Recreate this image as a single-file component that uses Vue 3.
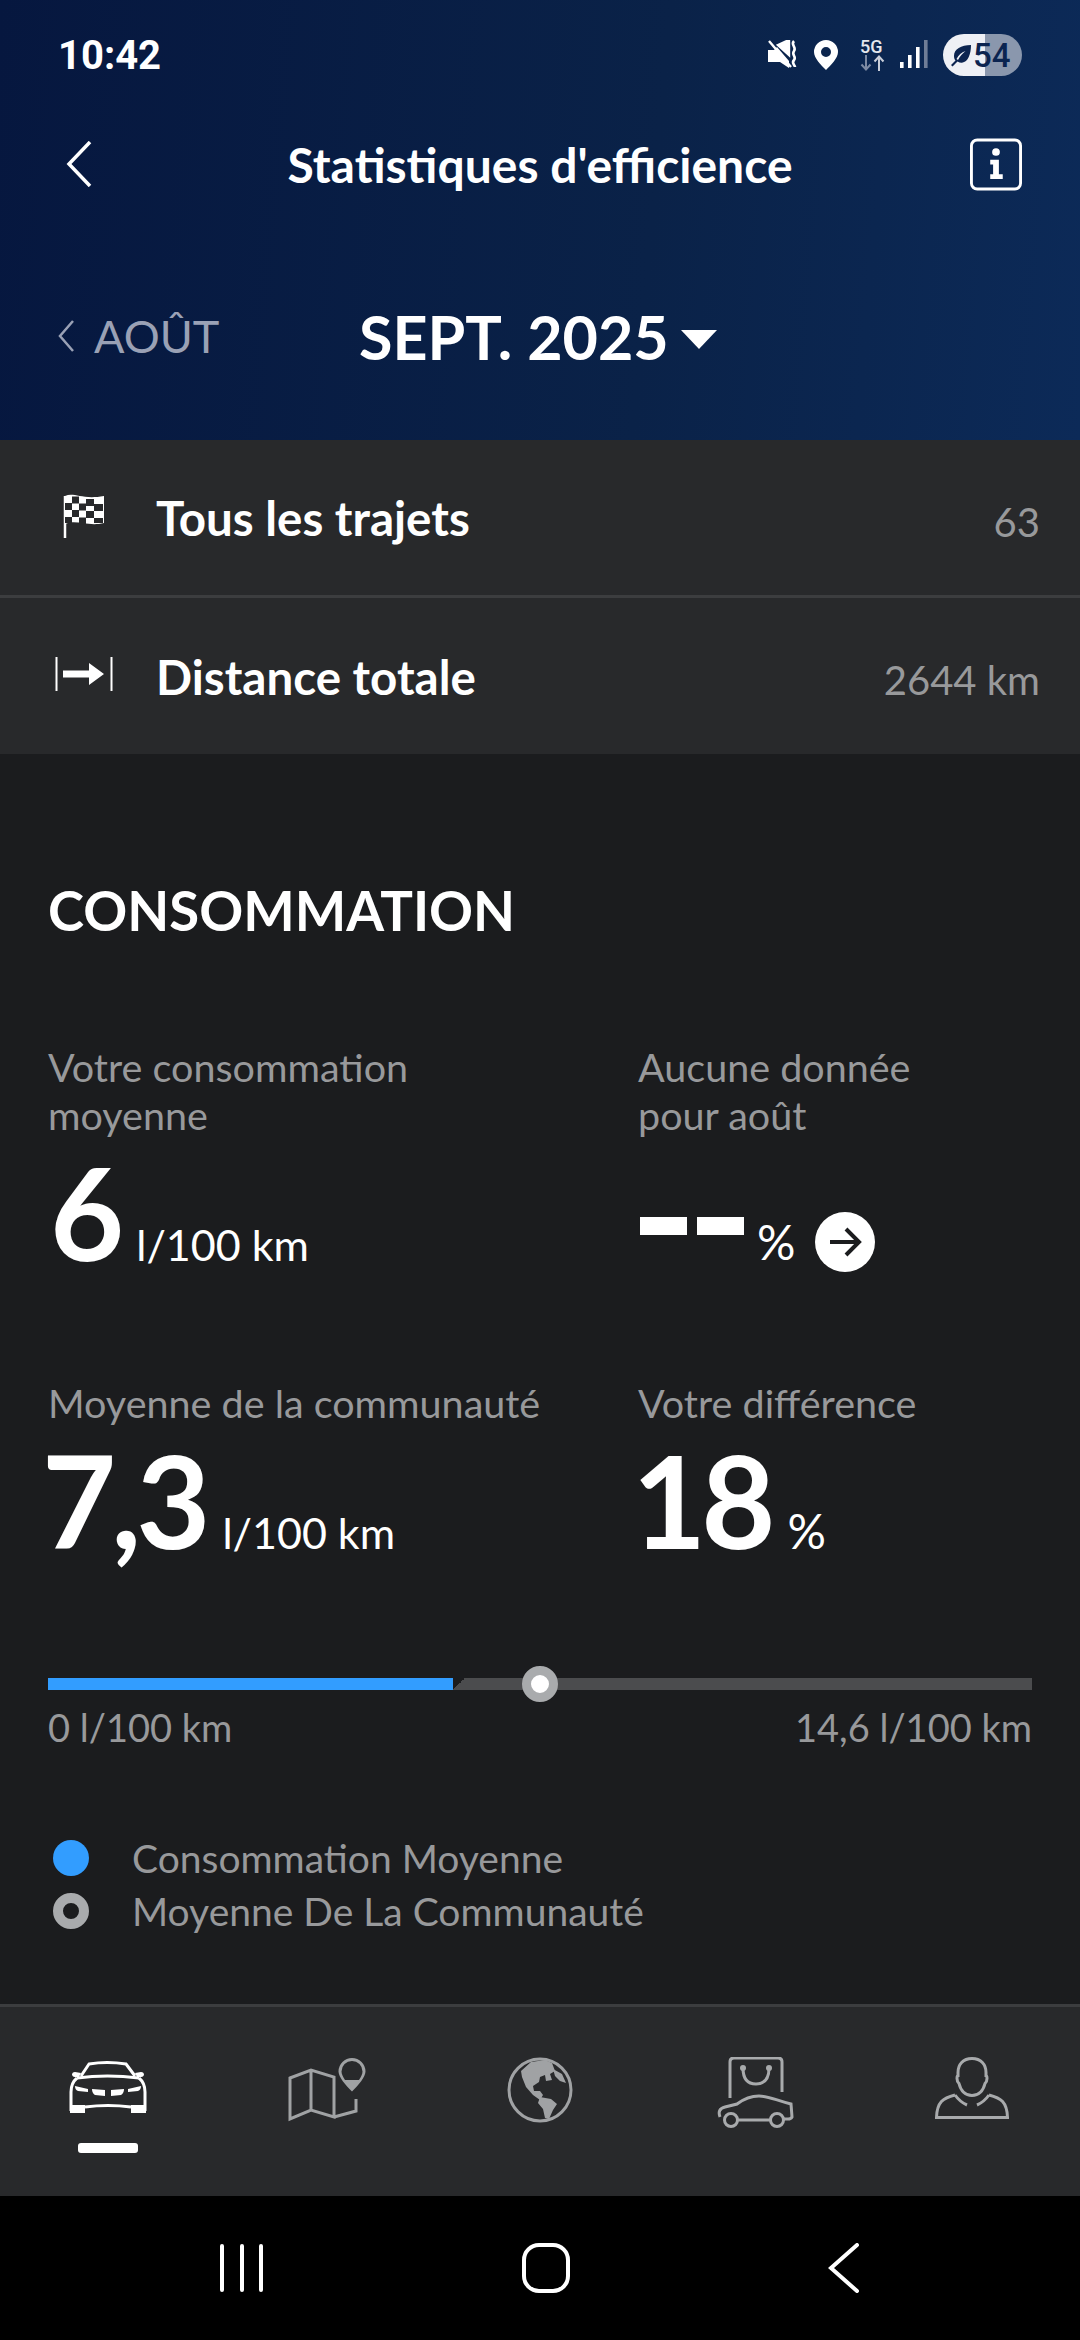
<template>
  <div class="screen">
    <header class="top">
      <div class="status">
        <span class="time">10:42</span>
        <div class="status-icons">
          <svg class="ic-mute" viewBox="0 0 30 30" width="30" height="30">
            <path d="M0 10h6l3-3 12 14v7l-9-6H0z" fill="#fff" />
            <path d="M10 5l11-5v15zM1 1l22 26" fill="#fff" stroke="#fff" stroke-width="2.4" />
            <path d="M26 1c-4 4 3 6 0 10s3 6 0 9 1 5 1 7" fill="none" stroke="#fff" stroke-width="2.6" />
          </svg>
          <svg class="ic-pin" viewBox="0 0 24 30" width="24" height="30">
            <path fill-rule="evenodd" d="M12 0a12 12 0 0 1 12 12c0 6-7 13-12 18C7 25 0 18 0 12A12 12 0 0 1 12 0zm0 7a5 5 0 1 0 0 10 5 5 0 0 0 0-10z" fill="#fff" />
          </svg>
          <div class="net">
            <span class="net-label">5G</span>
            <svg viewBox="0 0 25 16" width="25" height="16">
              <path d="M6 0v14M1.500 9.500L6 14.500l4.500-5" fill="none" stroke="#7d8aa3" stroke-width="2" />
              <path d="M19 16V2M14.500 6.500L19 1.500l4.500 5" fill="none" stroke="#c9ced9" stroke-width="2" />
            </svg>
          </div>
          <svg class="ic-signal" viewBox="0 0 29 30" width="29" height="30">
            <rect x="0" y="22" width="3.600" height="6" fill="#fff" />
            <rect x="8" y="15" width="3.600" height="13" fill="#fff" />
            <rect x="16" y="7" width="3.600" height="21" fill="#fff" />
            <rect x="24" y="0" width="3.600" height="28" fill="#6f7d97" />
          </svg>
          <div class="battery">
            <svg viewBox="0 0 24 24" width="24" height="24">
              <path d="M22 2C12 2 5 6 5 13c0 2 .7 3.500 1.500 4.500L2 22l1.500 1.500 5-5c1.500 1 3 1.300 4.500 1.200C19 19 22 11 22 2zM7.500 16c2-4 5-6.500 9-8-3 2.500-5.500 5-7.500 9z" fill="#0b2450" />
            </svg>
            <span>54</span>
          </div>
        </div>
      </div>

      <div class="title-bar">
        <svg viewBox="0 0 26 46" width="26" height="46">
          <path d="M24 1L3 23l21 22" fill="none" stroke="#fff" stroke-width="3.500" />
        </svg>
        <h1>Statistiques d'efficience</h1>
        <svg viewBox="0 0 54 54" width="52" height="53">
          <rect x="1.500" y="1.500" width="51" height="51" rx="6" fill="none" stroke="#fff" stroke-width="3" />
          <circle cx="27" cy="14" r="4" fill="#fff" />
          <path d="M21 22h9v15h4v5H21v-5h3V27h-3z" fill="#fff" />
        </svg>
      </div>

      <div class="month-bar">
        <div class="prev">
          <svg viewBox="0 0 16 32" width="16" height="32">
            <path d="M15 1L2 16l13 15" fill="none" stroke="#9aa1b5" stroke-width="2.500" />
          </svg>
          <span>AOÛT</span>
        </div>
        <div class="current">
          <span>SEPT. 2025</span>
          <i class="caret"></i>
        </div>
      </div>
    </header>

    <section class="summary">
      <div v-for="row in summary" :key="row.label" class="summary-row">
        <span class="row-icon">
          <svg v-if="row.icon === 'flag'" class="flag" viewBox="0 0 44 46" width="44" height="46">
            <path d="M3 45V3" stroke="#fff" stroke-width="2.500" />
            <path d="M3 3C12 -1 20 7 42 3v27C26 34 14 26 3 31z" fill="#fff" />
            <path d="M10 3.500h7v7h-7zM24 6h8v7h-8zM3 10h7v7H3zM17 10.500h7v7h-7zM32 11h9v7h-9zM10 17h7v7h-7zM24 18h8v7h-8zM3 24h7v6H3zM17 24.500h7v7h-7zM32 25h9v5h-9z" fill="#28292b" />
          </svg>
          <svg v-else viewBox="0 0 58 34" width="58" height="34">
            <path d="M1.500 0v34M56.500 0v34" stroke="#fff" stroke-width="2" />
            <path d="M8 13.500h26V6l15 11-15 11v-7.500H8z" fill="#fff" />
          </svg>
        </span>
        <span class="row-label">{{ row.label }}</span>
        <span class="row-value">{{ row.value }}</span>
      </div>
    </section>

    <main class="content">
      <h2>CONSOMMATION</h2>
      <div class="stats">
        <div class="stat stat-tall">
          <p class="stat-label">Votre consommation<br />moyenne</p>
          <p class="stat-value"><b class="six">6</b><span>l/100 km</span></p>
        </div>
        <div class="stat stat-tall">
          <p class="stat-label">Aucune donnée<br />pour août</p>
          <p class="stat-value stat-empty">
            <i class="dash"></i><i class="dash"></i><span class="pct">%</span>
            <svg class="go" viewBox="0 0 60 60" width="60" height="60">
              <circle cx="30" cy="30" r="30" fill="#fff" />
              <path d="M15 30h29M31 17l13 13-13 13" fill="none" stroke="#1b1c1e" stroke-width="4" />
            </svg>
          </p>
        </div>
        <div class="stat">
          <p class="stat-label">Moyenne de la communauté</p>
          <p class="stat-value"><b>7,3</b><span>l/100 km</span></p>
        </div>
        <div class="stat">
          <p class="stat-label">Votre différence</p>
          <p class="stat-value"><b>18</b><span class="pct">%</span></p>
        </div>
      </div>

      <div class="gauge">
        <div class="track">
          <div class="fill" :style="{ width: fillWidth + 'px' }"></div>
          <i class="notch"></i>
          <i class="knob" :style="{ left: knobLeft + 'px' }"></i>
        </div>
        <div class="scale">
          <span>0 l/100 km</span>
          <span>14,6 l/100 km</span>
        </div>
      </div>

      <ul class="legend">
        <li><i class="dot dot-blue"></i>Consommation Moyenne</li>
        <li><i class="dot dot-ring"></i>Moyenne De La Communauté</li>
      </ul>
    </main>

    <nav class="tabs">
      <div class="tab tab-car">
        <svg viewBox="0 0 78 52" width="78" height="52">
          <g fill="none" stroke="#fff" stroke-width="3">
            <path d="M12 15L20 3q18-3 37 0l9 12" />
            <path d="M8 17q30-4 62 0" />
            <path d="M8 17Q2 22 2 31v19M70 17q6 5 6 14v19" />
            <path d="M16 46q23-3 46 0" />
          </g>
          <path d="M3 14a3 3 0 0 1 3-3l6 1-2 4-4 0a3 3 0 0 1-3-2zM75 14a3 3 0 0 0-3-3l-6 1 2 4 4 0a3 3 0 0 0 3-2zM1 44h15v8H1zM62 44h15v8H62z" fill="#fff" />
          <path d="M6 25l13 3v3l-10-1q-3-1-3-5zM72 25l-13 3v3l10-1q3-1 3-5zM23 28l13 1v6l-10-1q-3-2-3-6zM55 28l-13 1v6l10-1q3-2 3-6z" fill="#fff" />
        </svg>
      </div>
      <div class="tab tab-map">
        <svg viewBox="0 0 78 66" width="78" height="66">
          <path d="M2 21L23 13l23 7v40L23 53 2 62zM23 13v40M46 60l22-6V42" fill="none" stroke="#a0a2a4" stroke-width="3" />
          <path fill-rule="evenodd" d="M64 1a13.500 13.500 0 0 1 13.500 13.500c0 5-7 14-13.500 20-6.500-6-13.500-15-13.500-20A13.500 13.500 0 0 1 64 1zm0 3a10.500 10.500 0 0 0-10.500 10.500c0 2.500 1.500 5.500 3.500 8.500h14c2-3 3.500-6 3.500-8.500A10.500 10.500 0 0 0 64 4z" fill="#a0a2a4" />
        </svg>
      </div>
      <div class="tab">
        <svg viewBox="0 0 66 66" width="66" height="66">
          <circle cx="33" cy="33" r="31" fill="none" stroke="#a0a2a4" stroke-width="3" />
          <path d="M14 14l10-9 14-2 7 3 3 8-5 3 2 6-6 1-1-6-5 2-1 5-6 4 1 5 6 0 3 4-3 5-7-5-7-8-4-10z" fill="#a0a2a4" />
          <path d="M33 40l11 2 6 5-4 6-4 9-4-1-2-9-5-6zM46 12l9 5 4 9-6-2-5-5z" fill="#a0a2a4" />
        </svg>
      </div>
      <div class="tab">
        <svg viewBox="0 0 78 72" width="78" height="72">
          <g fill="none" stroke="#a8aaac" stroke-width="3">
            <path d="M13 41V5q0-4 4-4h44q4 0 4 4v30" />
            <path d="M26 11q0 16 13 16t13-16" />
            <path d="M3 60q-3-8 5-10l12-3c8-6 14-8 22-8 10 0 16 4 32 8l1 13q-1 2-4 2h-5M21 63h32" />
            <circle cx="14" cy="63" r="6.500" />
            <circle cx="60" cy="63" r="6.500" />
          </g>
          <circle cx="26" cy="11" r="3" fill="#a8aaac" />
          <circle cx="52" cy="11" r="3" fill="#a8aaac" />
        </svg>
      </div>
      <div class="tab">
        <svg viewBox="0 0 74 62" width="74" height="62">
          <g fill="none" stroke="#a8aaac" stroke-width="3">
            <path d="M37 1.500c-9 0-14 6-14 14v3q-1 0-1 3 0 3 2 5c2 8 7 12 13 12s11-4 13-12q2-2 2-5 0-3-1-3v-3c0-8-5-14-14-14z" />
            <path d="M20 38C8 41 2 45 1.500 60.500h71C72 45 66 41 54 38" />
            <path d="M20 38q5 7 12 10M54 38q-5 7-12 10" />
          </g>
        </svg>
      </div>
      <i class="tab-marker"></i>
    </nav>

    <footer class="system-nav">
      <svg viewBox="0 0 44 48" width="44" height="48">
        <path d="M2 2v44M22 2v44M41 2v44" stroke="#fff" stroke-width="4" stroke-linecap="round" />
      </svg>
      <svg viewBox="0 0 48 50" width="48" height="50">
        <rect x="2" y="2" width="44" height="46" rx="15" fill="none" stroke="#fff" stroke-width="4" />
      </svg>
      <svg viewBox="0 0 32 50" width="32" height="50">
        <path d="M29 2L3 25l26 23" fill="none" stroke="#fff" stroke-width="4" stroke-linecap="round" />
      </svg>
    </footer>
  </div>
</template>

<script setup>
const summary = [
  { icon: 'flag', label: 'Tous les trajets', value: '63' },
  { icon: 'dist', label: 'Distance totale', value: '2644 km' }
]

// largeur de piste 984 px pour 14,6 l/100 km
const fillWidth = 405
const knobLeft = 492
</script>

<style>
html, body {
  background: #000;
}
</style>

<style scoped>
.screen {
  width: 1080px;
  height: 2340px;
  display: flex;
  flex-direction: column;
  background: #1b1c1e;
  font-family: Lato, "Noto Sans", sans-serif;
  color: #fff;
  overflow: hidden;
}

p, h1, h2, ul {
  margin: 0;
  padding: 0;
}

svg {
  display: block;
  flex: none;
}

.top {
  height: 440px;
  box-sizing: border-box;
  background: linear-gradient(95deg, #06173f 0%, #0a2248 60%, #0c2a58 100%);
  padding: 34px 58px 0 58px;
}

.status {
  height: 42px;
  display: flex;
  justify-content: space-between;
  align-items: center;
}

.time {
  font-family: Roboto, sans-serif;
  font-weight: 700;
  font-size: 40px;
}

.status-icons {
  display: flex;
  align-items: center;
}

.ic-pin {
  margin-left: 16px;
}

.net {
  margin-left: 22px;
  width: 25px;
}

.net-label {
  display: block;
  font-family: Roboto, sans-serif;
  font-weight: 500;
  font-size: 18px;
  line-height: 16px;
  color: #e4e7ee;
}

.ic-signal {
  margin-left: 15px;
}

.battery {
  margin-left: 14px;
  width: 79px;
  height: 42px;
  box-sizing: border-box;
  padding-left: 6px;
  display: flex;
  align-items: center;
  border-radius: 21px;
  background: linear-gradient(90deg, #eef0f5 0 42px, #8a97ad 42px);
  color: #0b2450;
  font-family: Roboto, sans-serif;
  font-weight: 500;
  font-size: 33px;
}

.title-bar {
  margin-top: 61px;
  margin-left: 8px;
  height: 54px;
  display: flex;
  align-items: center;
  justify-content: space-between;
}

h1 {
  font-size: 48px;
  font-weight: 700;
  margin-left: 18px;
}

.month-bar {
  margin-top: 110px;
  display: flex;
  align-items: center;
  height: 70px;
}

.prev {
  width: 301px;
  display: flex;
  align-items: center;
  gap: 20px;
  color: #9aa1b5;
  font-size: 45px;
}

.current {
  display: flex;
  align-items: center;
  gap: 12px;
  font-size: 61px;
  font-weight: 700;
}

.caret {
  width: 0;
  height: 0;
  border-left: 18px solid transparent;
  border-right: 18px solid transparent;
  border-top: 19px solid #fff;
  margin-top: 6px;
}

.summary {
  background: #28292b;
}

.summary-row {
  height: 155px;
  box-sizing: border-box;
  padding: 0 40px 0 55px;
  display: flex;
  align-items: center;
}

.summary-row + .summary-row {
  height: 159px;
  border-top: 3px solid #3c3d3f;
}

.row-icon {
  width: 101px;
  margin-bottom: 4px;
}

.flag {
  margin-left: 7px;
}

.row-label {
  flex: 1;
  font-size: 47.500px;
  font-weight: 700;
}

.row-value {
  color: #98999b;
  font-size: 40px;
  margin-top: 8px;
}

.content {
  flex: 1;
  padding: 0 48px;
}

h2 {
  margin-top: 126px;
  font-size: 54.500px;
  font-weight: 700;
  line-height: 60px;
}

.stats {
  display: grid;
  grid-template-columns: 590px 1fr;
  margin-top: 103px;
}

.stat-label {
  color: #98999b;
  font-size: 39.500px;
  line-height: 48px;
}

.stat-value {
  display: flex;
  align-items: baseline;
  height: 116px;
  line-height: 116px;
  margin-top: 15px;
}

.stat-empty {
  padding-top: 30px;
  padding-left: 2px;
}

.stat-tall {
  height: 336px;
}

.stat-value b {
  margin-left: -6px;
  font-size: 128px;
  font-weight: 700;
  letter-spacing: -5px;
}

.stat-value b.six {
  margin-left: 2px;
}

.stat-value span {
  font-size: 43px;
  margin-left: 17px;
}

.dash {
  align-self: center;
  width: 47px;
  height: 18px;
  background: #fff;
  margin-right: 10px;
  margin-top: -32px;
}

.stat-value .pct {
  font-size: 48px;
}

.stat-tall .pct {
  margin-left: 3px;
}

.go {
  align-self: center;
  margin-left: 20px;
}

.gauge {
  margin-top: 120px;
}

.track {
  position: relative;
  height: 12px;
  background: #4b4c4e;
}

.fill {
  height: 100%;
  background: #329dff;
}

.notch {
  position: absolute;
  left: 405px;
  top: 0;
  width: 12px;
  height: 12px;
  background: linear-gradient(135deg, #1b1c1e 50%, transparent 50%);
}

.knob {
  position: absolute;
  top: -12px;
  width: 36px;
  height: 36px;
  margin-left: -18px;
  box-sizing: border-box;
  border: 9px solid #a9abad;
  border-radius: 50%;
  background: #fff;
}

.scale {
  display: flex;
  justify-content: space-between;
  margin-top: 14px;
  color: #98999b;
  font-size: 38px;
  line-height: 46px;
}

.legend {
  list-style: none;
  margin-top: 81px;
}

.legend li {
  display: flex;
  align-items: center;
  gap: 43px;
  height: 53px;
  margin-left: 5px;
  color: #98999b;
  font-size: 39px;
}

.dot {
  width: 36px;
  height: 36px;
  box-sizing: border-box;
  border-radius: 50%;
}

.dot-blue {
  background: #329dff;
}

.dot-ring {
  border: 10px solid #a9abad;
}

.tabs {
  position: relative;
  height: 192px;
  box-sizing: border-box;
  border-top: 3px solid #3c3d3f;
  background: #28292b;
  display: grid;
  grid-template-columns: repeat(5, 216px);
  padding-top: 50px;
}

.tab {
  display: flex;
  justify-content: center;
  height: 70px;
}

.tab-car {
  padding-top: 4px;
}

.tab-map {
  margin-left: 6px;
}

.tab-marker {
  position: absolute;
  left: 78px;
  top: 136px;
  width: 60px;
  height: 10px;
  border-radius: 3px;
  background: #fff;
}

.system-nav {
  height: 144px;
  background: #000;
  display: flex;
  justify-content: center;
  align-items: center;
  gap: 258px;
}
</style>
